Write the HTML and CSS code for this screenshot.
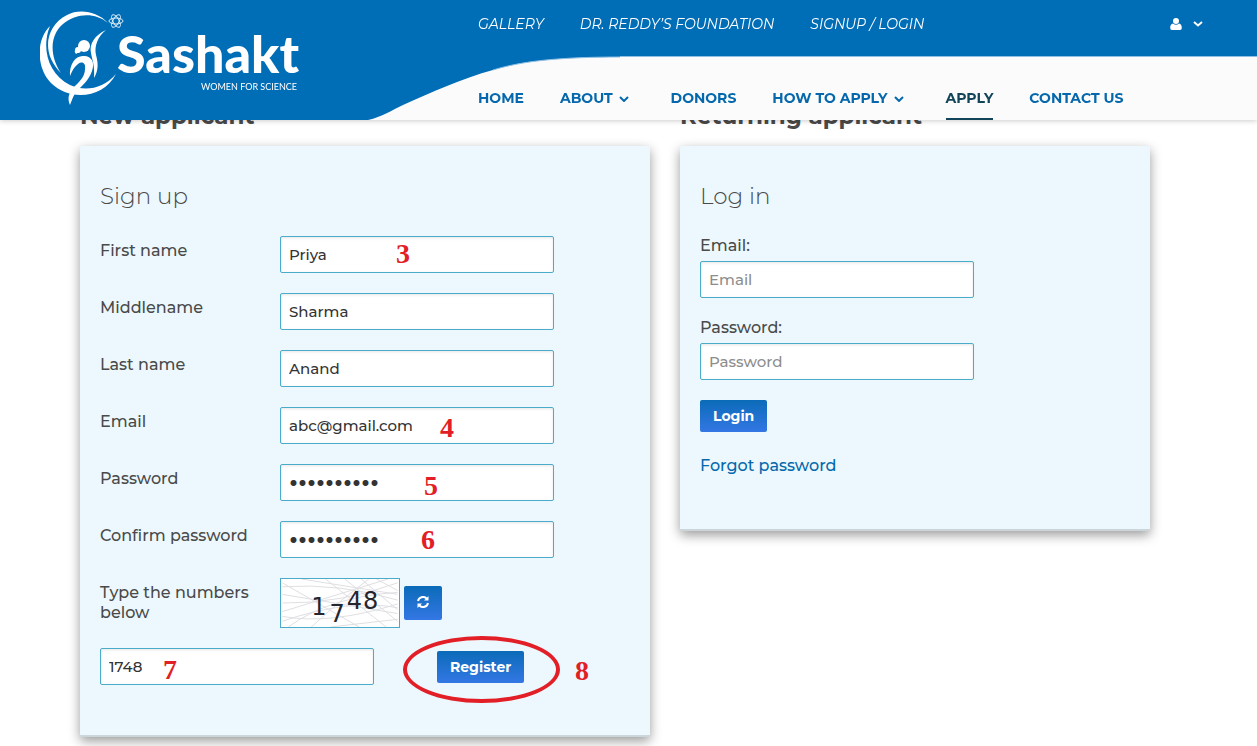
FILE: index.html
```html
<!DOCTYPE html>
<html lang="en">
<head>
    <meta charset="UTF-8">
    <meta name="viewport" content="width=device-width, initial-scale=1.0">
    <title>Sashakt - Apply</title>
    <link rel="stylesheet" href="styles.css">
</head>

<body>
<header class="site-header">
    <div class="swoosh">
        <svg width="260" height="64" viewBox="0 0 260 64">
            <path d="M8 64C22 61 32 54 43 49C58 42 72 36 87 30C102 24 118 18 133 14C162 5 200 1 260 1V64Z" fill="#fbfbfb"/>
            <path d="M133 14C162 5 200 1 260 1" fill="none" stroke="#8fc0e4"/>
        </svg>
        <div class="swoosh-fill"></div>
    </div>

    <a href="#" class="logo" aria-label="Sashakt">
        <svg width="270" height="96" viewBox="40 9 270 96" fill="#fff">
            <path d="M108 23C98 12 80 8 67 15C45 26 41 54 61 73C49 55 50 35 63 24C76 13 95 12 108 23Z"/>
            <path d="M50 26C35 41 37 69 51 83C70 102 104 98 116 74C103 89 85 92 70 85C48 74 41 48 50 26Z"/>
            <circle cx="84" cy="46" r="6"/>
            <circle cx="78" cy="50" r="3"/>
            <path d="M75 50Q74 52 76 54L79 52Z"/>
            <path d="M106 30C95 35 89 44 91 53C92 60 95 65 94 78C99 70 98 62 96 55C94 46 98 36 106 30Z"/>
            <path d="M70 76C69 64 76 55 84 56C92 56 95 63 92 71C89 80 82 86 77 91C73 96 72 100 70 105C67 98 69 93 73 88C79 82 85 77 85 69C86 63 82 61 78 64C74 67 72 71 70 76Z"/>
            <g fill="none" stroke="#d9ecf8">
                <ellipse cx="116" cy="21" rx="7" ry="3"/>
                <ellipse cx="116" cy="21" rx="7" ry="3" transform="rotate(60 116 21)"/>
                <ellipse cx="116" cy="21" rx="7" ry="3" transform="rotate(120 116 21)"/>
            </g>
            <text x="117" y="73" class="logo-name">Sashakt</text>
            <text x="201" y="90" class="logo-tag">WOMEN FOR SCIENCE</text>
        </svg>
    </a>

    <div class="menus">
        <div class="top-bar">
            <nav class="top-nav">
                <a href="#">GALLERY</a>
                <a href="#">DR. REDDY’S FOUNDATION</a>
                <a href="#">SIGNUP / LOGIN</a>
            </nav>
            <button type="button" class="user-menu" aria-label="Account">
                <svg width="12" height="12" viewBox="0 0 12 12" fill="currentColor"><circle cx="6" cy="3" r="3"/><path d="M3 5.5C1 6 .2 7.500 .2 10Q.2 12 2 12H10Q11.800 12 11.800 10C11.800 7.500 11 6 9 5.500Q6 8 3 5.500Z"/></svg>
                <svg width="10" height="6" viewBox="0 0 10 6" fill="none" stroke="currentColor" stroke-width="2"><path d="M1 1L5 4.500L9 1"/></svg>
            </button>
        </div>
        <nav class="main-nav">
            <a href="#">HOME</a>
            <a href="#" class="has-menu">ABOUT <svg width="10" height="6" viewBox="0 0 10 6"><path d="M1 1L5 5L9 1"/></svg></a>
            <a href="#">DONORS</a>
            <a href="#" class="has-menu">HOW TO APPLY <svg width="10" height="6" viewBox="0 0 10 6"><path d="M1 1L5 5L9 1"/></svg></a>
            <a href="#" class="active">APPLY</a>
            <a href="#">CONTACT US</a>
        </nav>
    </div>
</header>

<main class="container">
    <section>
        <h2>New applicant</h2>
        <form class="card signup">
            <h3>Sign up</h3>
            <div class="row">
                <label for="firstName">First name</label>
                <div class="field">
                    <input type="text" id="firstName" value="Priya">
                    <span class="mark mark-3">3</span>
                </div>
            </div>
            <div class="row">
                <label for="middleName">Middlename</label>
                <div class="field"><input type="text" id="middleName" value="Sharma"></div>
            </div>
            <div class="row">
                <label for="lastName">Last name</label>
                <div class="field"><input type="text" id="lastName" value="Anand"></div>
            </div>
            <div class="row">
                <label for="email">Email</label>
                <div class="field">
                    <input type="email" id="email" value="abc@gmail.com">
                    <span class="mark mark-4">4</span>
                </div>
            </div>
            <div class="row">
                <label for="password">Password</label>
                <div class="field">
                    <input type="password" id="password" value="1234567890">
                    <span class="mark mark-5">5</span>
                </div>
            </div>
            <div class="row">
                <label for="confirm">Confirm password</label>
                <div class="field">
                    <input type="password" id="confirm" value="1234567890">
                    <span class="mark mark-6">6</span>
                </div>
            </div>
            <div class="row">
                <label for="captcha">Type the numbers below</label>
                <div class="captcha">
                    <svg class="captcha-image" width="120" height="50" viewBox="0 0 120 50">
                        <g fill="none" stroke="#dedee2">
                            <path d="M0 8Q60 4 120 22M0 16L120 36M0 25Q60 26 120 4M0 34L110 0M0 44Q70 20 120 30M6 50Q50 18 120 14M30 50Q60 22 90 0M50 50L120 42M0 4L80 50M45 0L108 50M65 0L120 44M20 0L120 16M82 0L120 32M0 39Q50 48 120 26M98 0L120 12"/>
                        </g>
                        <g class="captcha-digits">
                            <text x="30" y="37">1</text>
                            <text x="49" y="45">7</text>
                            <text x="67" y="31">4</text>
                            <text x="84" y="31">8</text>
                        </g>
                    </svg>
                    <button type="button" class="btn btn-refresh" aria-label="Refresh">
                        <svg width="12" height="12" viewBox="0 0 12 12"><path d="M1 5A5 5 0 0 1 9.500 2.500M11 7A5 5 0 0 1 2.500 9.500" fill="none" stroke="#fff" stroke-width="2"/><path d="M11.500 0V4.500H7ZM.5 12V7.500H5Z" fill="#fff"/></svg>
                    </button>
                </div>
            </div>
            <div class="submit-row">
                <div class="field">
                    <input type="text" id="captcha" value="1748">
                    <span class="mark mark-7">7</span>
                </div>
                <div class="register">
                    <button type="submit" class="btn">Register</button>
                    <span class="ring"></span>
                    <span class="mark mark-8">8</span>
                </div>
            </div>
        </form>
    </section>

    <section>
        <h2>Returning applicant</h2>
        <form class="card login">
            <h3>Log in</h3>
            <label for="loginEmail">Email:</label>
            <input type="email" id="loginEmail" placeholder="Email">
            <label for="loginPassword">Password:</label>
            <input type="password" id="loginPassword" placeholder="Password">
            <button type="submit" class="btn">Login</button>
            <a href="#" class="forgot">Forgot password</a>
        </form>
    </section>
</main>
</body>
</html>
```
FILE: styles.css
```css
* {
    margin: 0;
    padding: 0;
    box-sizing: border-box;
}

body {
    min-height: 100vh;
    font-family: Montserrat, Inter, sans-serif;
    font-size: 16px;
    line-height: 20px;
    font-weight: 500;
    color: #4a4a4a;
    background-color: #fff;
}

a {
    color: #0568ac;
    text-decoration: none;
}

/* header */
.site-header {
    position: fixed;
    top: 0;
    left: 0;
    right: 0;
    z-index: 10;
    display: flex;
    height: 120px;
    padding-left: 40px;
    background-color: #006db7;
    box-shadow: 0 1px 5px rgba(0, 0, 0, 0.2);
}

.swoosh {
    position: absolute;
    left: 360px;
    right: 0;
    bottom: 0;
    display: flex;
    align-items: flex-end;
}

.swoosh-fill {
    flex: 1;
    height: 64px;
    background-color: #fbfbfb;
    border-top: 1px solid #8fc0e4;
}

.logo {
    flex: 0 0 438px;
    padding-top: 9px;
}

.logo-name {
    font-family: Lato, sans-serif;
    font-size: 52px;
    font-weight: 900;
}

.logo-tag {
    font-family: Lato, sans-serif;
    font-size: 9px;
    font-weight: 400;
}

.menus {
    position: relative;
    flex: 1;
    display: flex;
    flex-direction: column;
    justify-content: space-between;
}

.top-bar {
    display: flex;
    justify-content: space-between;
    padding: 14px 54px 0 0;
}

.top-nav {
    display: flex;
    gap: 36px;
}

.top-nav a {
    color: #fff;
    font-size: 14px;
    font-style: italic;
    font-weight: 400;
}

.user-menu {
    display: flex;
    align-items: center;
    gap: 11px;
    border: none;
    background: none;
    color: #fff;
    cursor: pointer;
}

.main-nav {
    display: flex;
    gap: 36px;
}

.main-nav a {
    height: 32px;
    font-size: 14px;
    font-weight: 700;
    white-space: nowrap;
}

.main-nav .has-menu {
    padding-right: 6px;
}

.main-nav svg {
    margin-left: 2px;
    vertical-align: 1px;
    fill: none;
    stroke: #0568ac;
    stroke-width: 2;
}

.main-nav .active {
    color: #12455a;
    border-bottom: 2px solid #12455a;
}

/* content */
.container {
    display: grid;
    grid-template-columns: 57fr 47fr;
    align-items: start;
    gap: 30px;
    padding: 101px 107px 0 80px;
}

h2 {
    margin-bottom: 15px;
    font-size: 23px;
    line-height: 30px;
}

h3 {
    margin-bottom: 25px;
    font-size: 23px;
    line-height: 30px;
    font-weight: 300;
}

.card {
    padding: 35px 20px 50px;
    background-color: #ecf8fd;
    border-bottom: 2px solid #ccd6da;
    border-radius: 2px;
    box-shadow: 0 4px 12px rgba(0, 0, 0, 0.4);
}

input {
    display: block;
    width: 274px;
    height: 37px;
    padding: 0 8px;
    border: 1px solid #4bacca;
    border-radius: 2px;
    background-color: #fff;
    box-shadow: inset 0 1px 3px rgba(0, 0, 0, 0.1);
    font-family: inherit;
    font-size: 15px;
    font-weight: 500;
    color: #333;
}

.signup input[type="password"] {
    font-family: Inter, sans-serif;
    font-size: 19px;
    font-weight: 700;
}

input::placeholder {
    color: #8d8d8d;
}

.row {
    display: flex;
    align-items: flex-start;
    margin-bottom: 20px;
}

.row label {
    width: 180px;
    padding: 5px 20px 0 0;
}

.field,
.register {
    position: relative;
}

.btn {
    height: 32px;
    padding: 0 13px;
    border: none;
    border-radius: 2px;
    background-image: linear-gradient(#0b6bb8, #3377e4);
    color: #fff;
    font-family: inherit;
    font-size: 14px;
    font-weight: 700;
    cursor: pointer;
}

.captcha {
    display: flex;
    align-items: center;
    gap: 4px;
}

.captcha-image {
    border: 1px solid #4bacca;
    background-color: #fff;
}

.captcha-digits {
    font-family: "DejaVu Sans", sans-serif;
    font-size: 25px;
    font-weight: 400;
    fill: #25252f;
}

.btn-refresh {
    height: 34px;
}

.submit-row {
    display: flex;
    align-items: center;
    gap: 63px;
}

.login {
    padding-bottom: 53px;
}

.login label {
    display: block;
    margin-bottom: 5px;
}

.login input {
    margin-bottom: 20px;
}

.forgot {
    display: block;
    margin-top: 24px;
}

/* numbered step marks */
.mark {
    position: absolute;
    font-family: "Liberation Serif", serif;
    font-size: 28px;
    line-height: 28px;
    font-weight: 700;
    color: #e21f26;
}

.mark-3 {
    left: 116px;
    top: 4px;
}

.mark-4 {
    left: 160px;
    top: 7px;
}

.mark-5 {
    left: 144px;
    top: 8px;
}

.mark-6 {
    left: 141px;
    top: 5px;
}

.mark-7 {
    left: 63px;
    top: 8px;
}

.mark-8 {
    left: 138px;
    top: 6px;
}

.ring {
    position: absolute;
    left: -34px;
    top: -15px;
    width: 157px;
    height: 67px;
    border: 4px solid #e21f26;
    border-radius: 50%;
    pointer-events: none;
}
```
